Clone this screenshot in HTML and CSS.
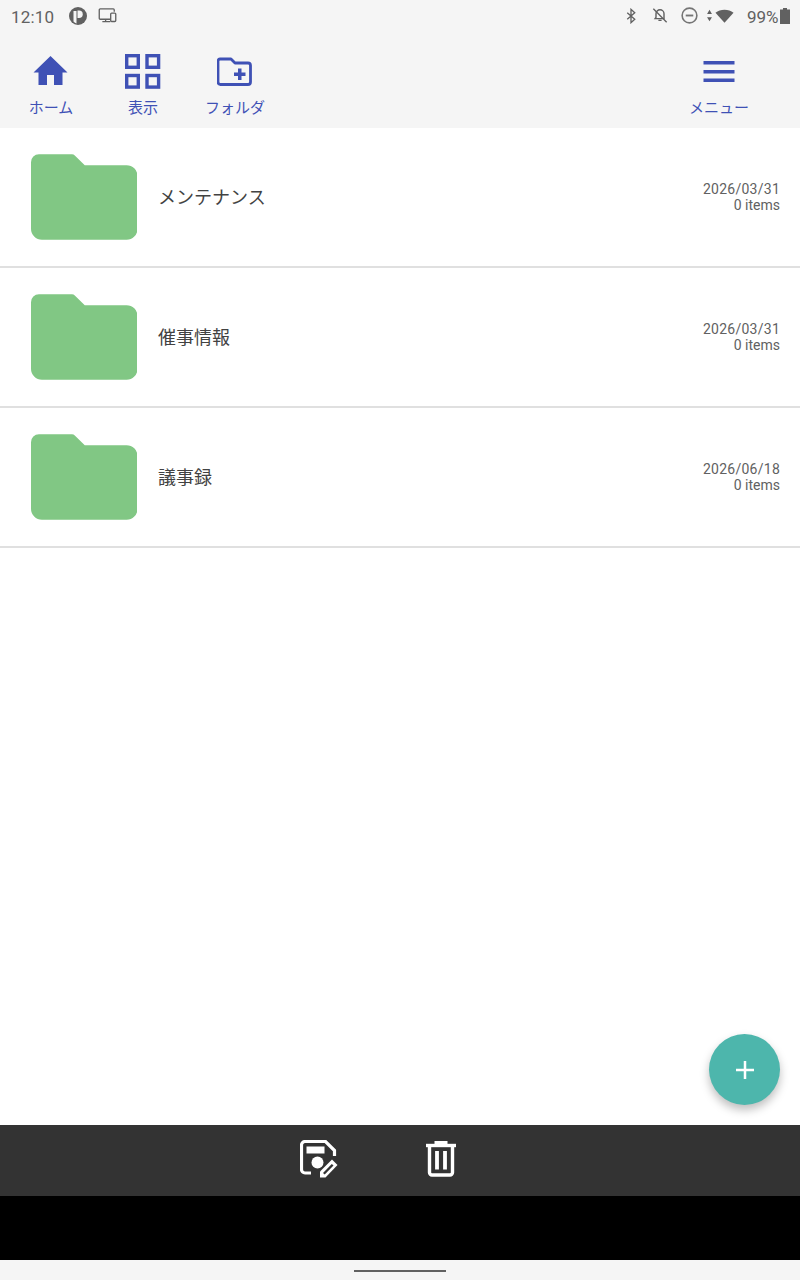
FILE: index.html
```html
<!DOCTYPE html>
<html lang="ja">
<head>
<meta charset="utf-8">
<title>Files</title>
<link rel="stylesheet" href="styles.css">
</head>
<body>
<div class="app">
  <div class="status">
    <div class="status-left">
      <span class="clock">12:10</span>
      <svg class="st-p" viewBox="0 0 18 18"><circle cx="9" cy="9" r="9" fill="#616161"/><path d="M4.500 4h3v12.500a8 8 0 0 1-3-2z" fill="#f5f5f5"/><path d="M8.500 3.500h1.500a3.600 3.600 0 0 1 0 7.500H8.500z" fill="#f5f5f5"/></svg>
      <svg class="st-dev" viewBox="0 0 20 16"><path d="M13 12H2.200a1 1 0 0 1-1-1V2a1 1 0 0 1 1-1h14a1 1 0 0 1 1 1v2M4.500 14.500H13M8 12v2.500" fill="none" stroke="#616161" stroke-width="1.400"/><rect x="13.400" y="5.400" width="5.400" height="9" rx="1" fill="none" stroke="#616161" stroke-width="1.400"/></svg>
    </div>
    <div class="status-right">
      <svg class="st-bt" viewBox="0 0 12 18"><path d="M1.500 5l9 8-4.500 4V1l4.500 4-9 8" fill="none" stroke="#616161" stroke-width="1.600"/></svg>
      <svg class="st-bell" viewBox="0 0 18 18"><path d="M9 2.500a4.500 4.500 0 0 1 4.500 4.500v5.500H3.500l1-1.500V7A4.500 4.500 0 0 1 9 2.500zM7.200 14.500h3.600" fill="none" stroke="#616161" stroke-width="1.600"/><path d="M1.500 1.500l15 15" stroke="#616161" stroke-width="1.500"/></svg>
      <svg class="st-dnd" viewBox="0 0 18 18"><circle cx="9" cy="9" r="7.800" fill="none" stroke="#757575" stroke-width="1.700"/><path d="M5 9h8" stroke="#757575" stroke-width="2"/></svg>
      <svg class="st-arrows" viewBox="0 0 8 16"><path d="M4 1l3 5H1zM4 15l3-5H1z" fill="#616161"/></svg>
      <svg class="st-wifi" viewBox="0 0 20 14"><path d="M0.500 3.500C5.500-.7 14.500-.7 19.500 3.500L10 14z" fill="#616161"/></svg>
      <span class="batt-text">99%</span>
      <svg class="st-batt" viewBox="0 0 10 16"><path d="M3 0h4v1.400h3V16H0V1.400h3z" fill="#616161"/></svg>
    </div>
  </div>

  <nav class="toolbar">
    <div class="tool tool-home">
      <svg class="tool-icon" viewBox="0 0 36 36"><path d="M17.500 2L34.500 18.500h-5V31H21V21h-7v10H5.500V18.500H.5z" fill="#3f51b5"/></svg>
      <span>ホーム</span>
    </div>
    <div class="tool tool-view">
      <svg class="tool-icon" viewBox="0 0 36 36"><g fill="none" stroke="#3f51b5" stroke-width="3.400"><rect x="1.700" y="1.700" width="11.600" height="11.600"/><rect x="22" y="1.700" width="11.600" height="11.600"/><rect x="1.700" y="21.500" width="11.600" height="11.600"/><rect x="22" y="21.500" width="11.600" height="11.600"/></g></svg>
      <span>表示</span>
    </div>
    <div class="tool tool-folder">
      <svg class="tool-icon" viewBox="0 0 36 36"><path d="M3 5h11l4 4h13a2.500 2.500 0 0 1 2.500 2.500v16.500a2.500 2.500 0 0 1-2.500 2.500H3.500A2.500 2.500 0 0 1 1 28V7a2 2 0 0 1 2-2z" fill="none" stroke="#3f51b5" stroke-width="2.800" stroke-linejoin="round"/><path d="M21 14.500h3.500V18.500H28.500v3.400H24.500V26H21v-4.100h-4V18.500h4z" fill="#3f51b5"/></svg>
      <span>フォルダ</span>
    </div>
    <div class="tool tool-menu">
      <svg class="tool-icon" viewBox="0 0 36 36"><path d="M2.500 7h31v3.600h-31zM2.500 16h31v3.600h-31zM2.500 24.500h31v3.600h-31z" fill="#3f51b5"/></svg>
      <span>メニュー</span>
    </div>
  </nav>

  <main class="list">
    <div class="row">
      <svg class="folder" viewBox="0 0 107 86"><path d="M8 0h33a4 4 0 0 1 3 1.200L54 11h42a11 11 0 0 1 11 11v53a11 11 0 0 1-11 11H11A11 11 0 0 1 0 75V8a8 8 0 0 1 8-8z" fill="#81c784"/></svg>
      <span class="name">メンテナンス</span>
      <div class="meta"><div class="date">2026/03/31</div><div>0 items</div></div>
    </div>
    <div class="row">
      <svg class="folder" viewBox="0 0 107 86"><path d="M8 0h33a4 4 0 0 1 3 1.200L54 11h42a11 11 0 0 1 11 11v53a11 11 0 0 1-11 11H11A11 11 0 0 1 0 75V8a8 8 0 0 1 8-8z" fill="#81c784"/></svg>
      <span class="name">催事情報</span>
      <div class="meta"><div class="date">2026/03/31</div><div>0 items</div></div>
    </div>
    <div class="row">
      <svg class="folder" viewBox="0 0 107 86"><path d="M8 0h33a4 4 0 0 1 3 1.200L54 11h42a11 11 0 0 1 11 11v53a11 11 0 0 1-11 11H11A11 11 0 0 1 0 75V8a8 8 0 0 1 8-8z" fill="#81c784"/></svg>
      <span class="name">議事録</span>
      <div class="meta"><div class="date">2026/06/18</div><div>0 items</div></div>
    </div>
    <div class="fab">
      <svg viewBox="0 0 18 18"><path d="M9 0v18M0 9h18" stroke="#fff" stroke-width="2.500"/></svg>
    </div>
  </main>

  <div class="actionbar">
    <svg class="act-save" viewBox="0 0 38 38"><path d="M11 33H5A3.500 3.500 0 0 1 1.500 29.500V5A3.500 3.500 0 0 1 5 1.500H25.500L34.500 10.500V16" fill="none" stroke="#fff" stroke-width="3.200"/><rect x="6.500" y="6.500" width="18" height="7" fill="#fff"/><circle cx="17.500" cy="22.500" r="6" fill="#fff"/><path d="M20 37.500v-6L32 19.500l5.500 5.500-12 12.500z" fill="#fff"/><path d="M23 33l8.800-9 1.700 1.600-8.800 9z" fill="#333"/></svg>
    <svg class="act-trash" viewBox="0 0 32 36"><path d="M1 4.500h30" stroke="#fff" stroke-width="3.400"/><path d="M11 3.500V1.500h10v2" fill="none" stroke="#fff" stroke-width="3"/><path d="M4.500 5v26.500a2.500 2.500 0 0 0 2.500 2.500h18a2.500 2.500 0 0 0 2.500-2.500V5" fill="none" stroke="#fff" stroke-width="3.400"/><path d="M12 10v18.500M20 10v18.500" stroke="#fff" stroke-width="3.800"/></svg>
  </div>
  <div class="black"></div>
  <div class="gesture"><div class="handle"></div></div>
</div>
</body>
</html>
```
FILE: styles.css
```css
* { box-sizing: border-box; }
html, body { margin: 0; padding: 0; }
body { width: 800px; height: 1280px; overflow: hidden; background: #fff; font-family: Roboto, "Noto Sans CJK JP", sans-serif; }
.app { display: flex; flex-direction: column; width: 800px; height: 1280px; }

.status { height: 33px; flex: none; background: #f5f5f5; display: flex; justify-content: space-between; align-items: center; color: #616161; padding: 0 0 0 11px; }
.status-left { display: flex; align-items: center; }
.status svg { flex: none; display: block; margin-top: -2px; }
.clock { font-size: 17px; letter-spacing: .15px; width: 58px; }
.st-p { width: 18px; height: 18px; }
.st-dev { width: 19px; height: 15px; margin-left: 11px; }
.status-right { display: flex; align-items: center; width: 176px; height: 33px; padding-left: 2px; }
.st-bt { width: 10px; height: 16px; }
.st-bell { width: 16px; height: 17px; margin-left: 16px; }
.st-dnd { width: 17px; height: 17px; margin-left: 13px; }
.st-arrows { width: 7px; height: 13px; margin-left: 8px; }
.st-wifi { width: 19px; height: 14px; margin-left: 2px; }
.batt-text { font-size: 17px; margin-left: 13px; width: 33px; flex: none; }
.st-batt { width: 10px; height: 16px; }

.toolbar { height: 95px; flex: none; background: #f5f5f5; display: flex; padding: 21px 0 0 5px; }
.tool { display: flex; flex-direction: column; align-items: center; font-size: 15px; line-height: 20px; color: #3f51b5; width: 92px; flex: none; }
.tool-icon { width: 36px; height: 36px; display: block; margin-bottom: 8px; }
.tool-menu { margin-left: auto; margin-right: 35px; }

.list { flex: 1; position: relative; background: #fff; }
.row { height: 140px; border-bottom: 2px solid #e0e0e0; display: flex; align-items: center; padding: 0 20px 0 30.500px; }
.folder { width: 106.500px; height: 86px; flex: none; display: block; margin-top: -1px; }
.name { margin-left: 21px; font-size: 18px; color: #424242; flex: 1; position: relative; top: -1px; }
.meta { text-align: right; font-size: 14px; line-height: 16px; color: #616161; }
.date { letter-spacing: .25px; }

.fab { position: absolute; left: 709px; top: 906px; width: 71px; height: 71px; border-radius: 50%; background: #4db6ac; box-shadow: 0 5px 10px rgba(0,0,0,.26); display: flex; align-items: center; justify-content: center; }
.fab svg { width: 18px; height: 18px; display: block; }

.actionbar { height: 71px; flex: none; background: #333; display: flex; align-items: center; padding: 0 0 4px 300px; }
.act-save { width: 38px; height: 38px; display: block; }
.act-trash { width: 32px; height: 36px; margin-left: 87px; display: block; }
.black { height: 64px; flex: none; background: #000; }
.gesture { height: 20px; flex: none; background: #f5f5f5; display: flex; justify-content: center; padding-top: 10px; }
.handle { width: 92px; height: 2px; background: #616161; }
```
